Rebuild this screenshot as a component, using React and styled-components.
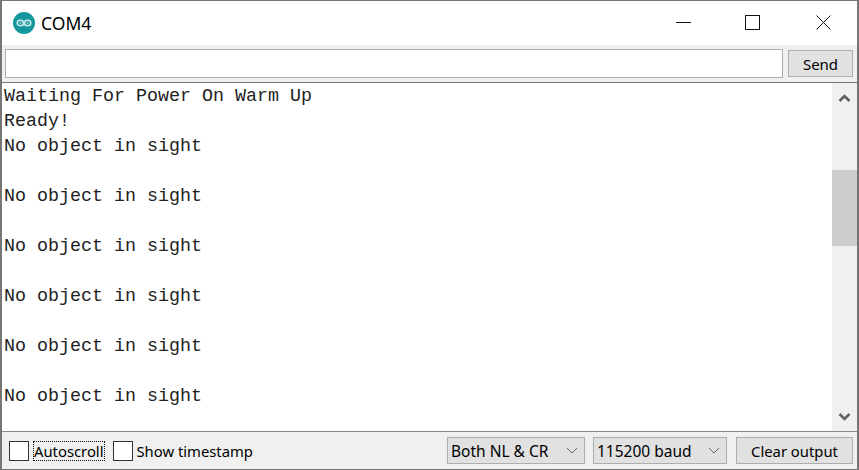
import React from 'react'
import styled, { createGlobalStyle } from 'styled-components'

const Global = createGlobalStyle`
  html, body { margin: 0; padding: 0; background: #fff; }
  * { box-sizing: border-box; }
`

const Window = styled.div`
  width: 859px;
  height: 470px;
  display: flex;
  flex-direction: column;
  border: 1px solid #767676;
  border-left-width: 2px;
  border-right-width: 2px;
  font-family: "Noto Sans", "Open Sans", sans-serif;
  color: #000;
  overflow: hidden;
`

const TitleBar = styled.div`
  height: 44px;
  flex: none;
  display: flex;
  align-items: center;
  background: #fff;
  padding-left: 11px;
`

const Title = styled.span`
  margin-left: 6px;
  font-size: 17.5px;
  color: #000;
`

const WindowButtons = styled.div`
  margin-left: auto;
  display: flex;
`

const WindowButton = styled.div`
  width: ${p => p.$width}px;
  height: 44px;
  padding-bottom: 1px;
  display: flex;
  align-items: center;
  justify-content: center;
`

const SendBar = styled.div`
  height: 37px;
  flex: none;
  display: flex;
  gap: 5px;
  padding: 4px 4px 0 3px;
  background: #f0f0f0;
`

const SendInput = styled.div`
  flex: 1;
  height: 29px;
  background: #fff;
  border: 1px solid #adadad;
`

const Button = styled.div`
  height: 27px;
  width: ${p => p.$width}px;
  margin-top: ${p => p.$top || 0}px;
  display: flex;
  align-items: center;
  justify-content: center;
  background: #e1e1e1;
  border: 1px solid #adadad;
  font-size: ${p => p.$size}px;
  color: #000;
`

const Console = styled.div`
  flex: 1;
  min-height: 0;
  display: flex;
  border-top: 1px solid #767676;
  border-bottom: 1px solid #8a8a8a;
  background: #fff;
`

const Output = styled.pre`
  flex: 1;
  margin: 0;
  padding: 1px 0 0 2px;
  font-family: "Liberation Mono", "Courier New", monospace;
  font-size: 18.33px;
  line-height: 25px;
  color: #222;
  overflow: hidden;
`

const ScrollBar = styled.div`
  width: 25px;
  flex: none;
  display: flex;
  flex-direction: column;
  background: #f0f0f0;
`

const ScrollArrow = styled.div`
  height: 29px;
  flex: none;
  display: flex;
  align-items: center;
  justify-content: center;
`

const Track = styled.div`
  flex: 1;
  padding-top: 58px;
`

const Thumb = styled.div`
  height: 76px;
  background: #cdcdcd;
`

const BottomBar = styled.div`
  height: 37px;
  flex: none;
  display: flex;
  align-items: center;
  padding: 0 4px 0 7px;
  background: #f0f0f0;
`

const CheckRow = styled.div`
  display: flex;
  align-items: center;
  margin-left: ${p => p.$gap || 0}px;
`

const CheckBox = styled.span`
  width: 20px;
  height: 20px;
  flex: none;
  background: #fff;
  border: 1px solid #333;
`

const CheckLabel = styled.span`
  margin-left: 4px;
  font-size: 14.8px;
  line-height: 20px;
  padding: ${p => (p.$focused ? '0 1px' : '0')};
  color: #000;
  outline: ${p => (p.$focused ? '1px dotted #111' : 'none')};
  outline-offset: -1px;
`

const Spacer = styled.div`
  flex: 1;
`

const Select = styled.div`
  height: 27px;
  width: ${p => p.$width}px;
  margin-right: ${p => p.$gap}px;
  display: flex;
  align-items: center;
  justify-content: space-between;
  padding: 0 6px 0 3px;
  background: #e1e1e1;
  border: 1px solid #adadad;
  font-size: 15.5px;
  color: #000;
`

const Logo = () => (
  <svg width="22" height="22" viewBox="0 0 22 22">
    <circle cx="11" cy="11" r="11" fill="#14979d" />
    <ellipse cx="7.4" cy="11" rx="3.2" ry="2.8" fill="none" stroke="#cfe9ea" strokeWidth="1.6" />
    <ellipse cx="14.6" cy="11" rx="3.2" ry="2.8" fill="none" stroke="#cfe9ea" strokeWidth="1.6" />
    <path d="M6.2 11h2.400M13.400 11h2.400" stroke="#cfe9ea" strokeWidth="0.8" />
  </svg>
)

const Chevron = ({ up }) => (
  <svg width="13" height="10" viewBox="0 0 13 10">
    <path d={up ? 'M1.500 8l5-5 5 5' : 'M1.500 2l5 5 5-5'} fill="none" stroke="#606060" strokeWidth="2.6" />
  </svg>
)

const SelectArrow = () => (
  <svg width="12" height="7" viewBox="0 0 12 7">
    <path d="M1 1l5 5 5-5" fill="none" stroke="#666" strokeWidth="1" />
  </svg>
)

const lines = [
  'Waiting For Power On Warm Up',
  'Ready!',
  'No object in sight',
  '',
  'No object in sight',
  '',
  'No object in sight',
  '',
  'No object in sight',
  '',
  'No object in sight',
  '',
  'No object in sight',
]

const App = () => (
  <Window>
    <Global />
    <TitleBar>
      <Logo />
      <Title>COM4</Title>
      <WindowButtons>
        <WindowButton $width={63}>
          <svg width="15" height="15" viewBox="0 0 15 15">
            <path d="M0 7.500h15" stroke="#111" strokeWidth="1" />
          </svg>
        </WindowButton>
        <WindowButton $width={75}>
          <svg width="15" height="15" viewBox="0 0 15 15">
            <rect x="0.500" y="0.500" width="14" height="14" fill="none" stroke="#111" strokeWidth="1" />
          </svg>
        </WindowButton>
        <WindowButton $width={67}>
          <svg width="15" height="15" viewBox="0 0 15 15">
            <path d="M0.500 0.500l14 14M14.500 0.500l-14 14" stroke="#111" strokeWidth="1" />
          </svg>
        </WindowButton>
      </WindowButtons>
    </TitleBar>
    <SendBar>
      <SendInput />
      <Button $width={65} $size={15} $top={1}>Send</Button>
    </SendBar>
    <Console>
      <Output>{lines.join('\n')}</Output>
      <ScrollBar>
        <ScrollArrow><Chevron up /></ScrollArrow>
        <Track><Thumb /></Track>
        <ScrollArrow><Chevron /></ScrollArrow>
      </ScrollBar>
    </Console>
    <BottomBar>
      <CheckRow>
        <CheckBox />
        <CheckLabel $focused>Autoscroll</CheckLabel>
      </CheckRow>
      <CheckRow $gap={8}>
        <CheckBox />
        <CheckLabel>Show timestamp</CheckLabel>
      </CheckRow>
      <Spacer />
      <Select $width={138} $gap={8}>Both NL &amp; CR<SelectArrow /></Select>
      <Select $width={134} $gap={9}>115200 baud<SelectArrow /></Select>
      <Button $width={117} $size={14.8}>Clear output</Button>
    </BottomBar>
  </Window>
)

export default App
